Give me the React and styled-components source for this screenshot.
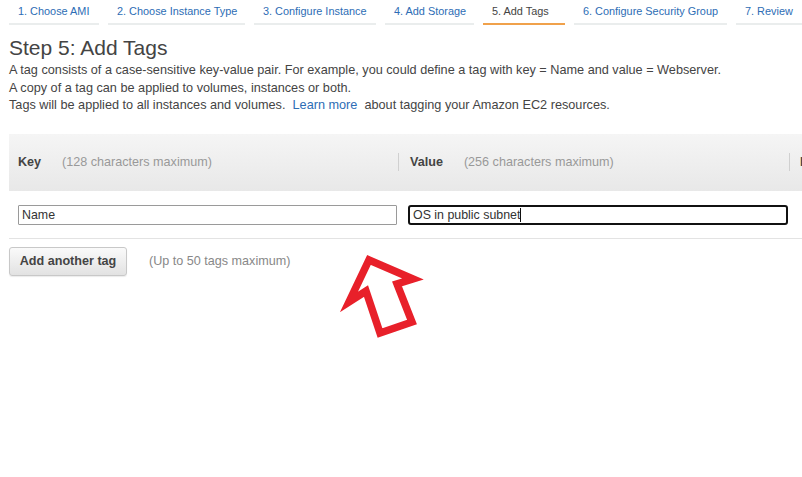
import React from "react";
import styled, { createGlobalStyle } from "styled-components";

const GlobalStyle = createGlobalStyle`
  body {
    margin: 0;
    background: #fff;
    font-family: "Liberation Sans", Arial, sans-serif;
    color: #444;
    overflow: hidden;
  }
`;

const Page = styled.div`
  position: relative;
  width: 802px;
  height: 477px;
  overflow: hidden;
`;

const Steps = styled.div`
  display: flex;
  gap: 9px;
  padding-left: 9px;
  white-space: nowrap;
`;

const Step = styled.div`
  box-sizing: border-box;
  width: ${(p) => p.w}px;
  padding: 5px 0 5px 9px;
  font-size: 10.9px;
  line-height: 13px;
  color: ${(p) => (p.active ? "#444" : "#2d6db5")};
  border-bottom: 2px solid ${(p) => (p.active ? "#f0a14b" : "#eaeded")};
  flex-shrink: 0;
`;

const Content = styled.div`
  padding-left: 9px;
`;

const Title = styled.h1`
  margin: 11px 0 2px;
  font-size: 21px;
  line-height: 24px;
  font-weight: normal;
  color: #444;
`;

const Text = styled.p`
  margin: 0;
  font-size: 12.7px;
  line-height: 17.5px;
  white-space: nowrap;
`;

const Link = styled.a`
  color: #2d6db5;
  text-decoration: none;
`;

const Table = styled.div`
  margin: 19px 0 0 9px;
  display: grid;
  grid-template-columns: 389px 391px 200px;
  width: 980px;
`;

const Head = styled.div`
  height: 57px;
  display: flex;
  align-items: center;
  padding-left: ${(p) => (p.first ? "9px" : "0")};
  background: linear-gradient(#f5f5f5, #e8e8e8);
  font-size: 12.6px;
  white-space: nowrap;
`;

const Sep = styled.span`
  width: 1px;
  height: 18px;
  background: #d0d0d0;
  margin-right: ${(p) => (p.tight ? "10px" : "11px")};
`;

const Label = styled.span`
  font-weight: bold;
  color: #444;
  margin-right: 21px;
`;

const Hint = styled.span`
  color: #999;
`;

const Cell = styled.div`
  height: 48px;
  box-sizing: border-box;
  padding: 14px 1px 0 ${(p) => (p.first ? "9px" : "10px")};
  border-bottom: 1px solid #e3e3e3;
`;

const Field = styled.div`
  box-sizing: border-box;
  height: 20px;
  display: flex;
  align-items: center;
  padding: 0 3px;
  font-size: 12.4px;
  color: #333;
  background: #fff;
  border: ${(p) => (p.focused ? "2px solid #111" : "1px solid #9a9a9a")};
  border-radius: ${(p) => (p.focused ? "3px" : "1px")};
  white-space: nowrap;
`;

const Caret = styled.span`
  width: 1px;
  height: 14px;
  background: #111;
`;

const Actions = styled.div`
  display: flex;
  align-items: center;
  gap: 22px;
  margin-top: 8px;
`;

const Button = styled.button`
  height: 29px;
  width: 118px;
  padding: 0;
  font-family: inherit;
  font-size: 12.6px;
  font-weight: bold;
  color: #444;
  background: linear-gradient(#fafafa, #e2e2e2);
  border: 1px solid #c8c8c8;
  border-radius: 3px;
  box-shadow: 0 1px 1px rgba(0, 0, 0, 0.08);
`;

const Note = styled.span`
  font-size: 12.6px;
  color: #888;
`;

const Arrow = styled.svg`
  position: absolute;
  left: 330px;
  top: 245px;
`;

const steps = [
  { label: "1. Choose AMI", w: 90 },
  { label: "2. Choose Instance Type", w: 137 },
  { label: "3. Configure Instance", w: 122 },
  { label: "4. Add Storage", w: 89 },
  { label: "5. Add Tags", w: 82, active: true },
  { label: "6. Configure Security Group", w: 153 },
  { label: "7. Review", w: 66 },
];

export default function App() {
  return (
    <Page>
      <GlobalStyle />
      <Steps>
        {steps.map((s) => (
          <Step key={s.label} w={s.w} active={s.active}>
            {s.label}
          </Step>
        ))}
      </Steps>
      <Content>
        <Title>Step 5: Add Tags</Title>
        <Text>
          A tag consists of a case-sensitive key-value pair. For example, you could define a tag
          with key = Name and value = Webserver.
        </Text>
        <Text>A copy of a tag can be applied to volumes, instances or both.</Text>
        <Text>
          Tags will be applied to all instances and volumes.&nbsp; <Link href="#">Learn more</Link>
          &nbsp; about tagging your Amazon EC2 resources.
        </Text>
      </Content>
      <Table>
        <Head first>
          <Label>Key</Label>
          <Hint>(128 characters maximum)</Hint>
        </Head>
        <Head>
          <Sep />
          <Label>Value</Label>
          <Hint>(256 characters maximum)</Hint>
        </Head>
        <Head>
          <Sep tight />
          <Label>Instances</Label>
        </Head>
        <Cell first>
          <Field>Name</Field>
        </Cell>
        <Cell>
          <Field focused>
            OS in public subnet
            <Caret />
          </Field>
        </Cell>
        <Cell />
      </Table>
      <Content>
        <Actions>
          <Button>Add another tag</Button>
          <Note>(Up to 50 tags maximum)</Note>
        </Actions>
      </Content>
      <Arrow width="100" height="100" viewBox="330 245 100 100">
        <polygon
          points="369,260 413,279 397,284 412,322 380,333 366,291 349,302"
          fill="none"
          stroke="#e8202a"
          strokeWidth="7.5"
          strokeLinejoin="miter"
        />
      </Arrow>
    </Page>
  );
}
